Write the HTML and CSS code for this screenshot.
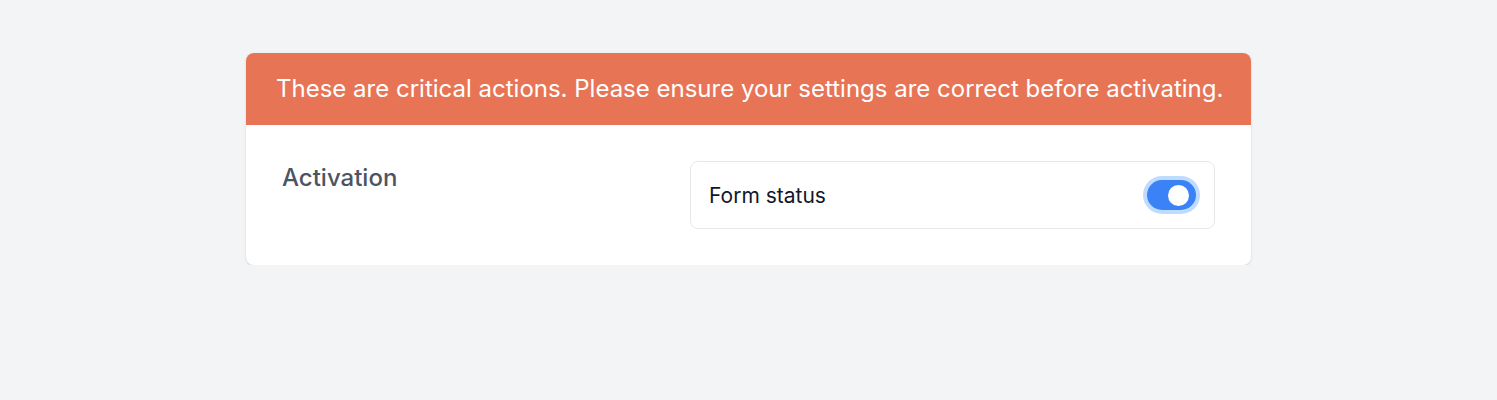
FILE: index.html
```html
<!DOCTYPE html>
<html>
<head>
<meta charset="utf-8">
<link rel="stylesheet" href="styles.css">
</head>
<body>
<div class="page">
  <div class="card">
    <div class="banner">These are critical actions. Please ensure your settings are correct before activating.</div>
    <div class="card-body">
      <div class="label">Activation</div>
      <div class="setting">
        <span class="setting-name">Form status</span>
        <span class="switch"><span class="knob"></span></span>
      </div>
    </div>
  </div>
</div>
</body>
</html>
```
FILE: styles.css
```css
html, body {
  margin: 0;
  padding: 0;
  background: #f3f4f6;
  font-family: Inter, "Noto Sans", sans-serif;
}
.page {
  padding-top: 53px;
  display: flex;
  justify-content: center;
}
.card {
  width: 1005px;
  background: #fff;
  border-radius: 8px;
  overflow: hidden;
  box-shadow: 0 1px 3px rgba(0,0,0,0.1), 0 1px 2px rgba(0,0,0,0.04);
}
.banner {
  background: #e87456;
  color: #fff;
  font-size: 24px;
  height: 72px;
  display: flex;
  align-items: center;
  padding-left: 30px;
  padding-bottom: 2px;
  box-sizing: border-box;
}
.card-body {
  display: grid;
  grid-template-columns: 408px 1fr;
  padding: 36px;
}
.label {
  font-size: 24px;
  font-weight: 500;
  color: #4b5563;
  padding-top: 1px;
  line-height: 32px;
}
.setting {
  height: 68px;
  box-sizing: border-box;
  border: 1px solid #e5e7eb;
  border-radius: 8px;
  display: flex;
  align-items: center;
  justify-content: space-between;
  padding: 0 18px 0 18px;
}
.setting-name {
  font-size: 21px;
  color: #111827;
}
.switch {
  width: 49px;
  height: 30px;
  border-radius: 15px;
  background: #3b82f6;
  box-shadow: 0 0 0 4px #bfdbfe;
  display: flex;
  align-items: center;
  justify-content: flex-end;
  padding-right: 7px;
  box-sizing: border-box;
}
.knob {
  width: 21px;
  height: 21px;
  border-radius: 50%;
  background: #fff;
}
```
